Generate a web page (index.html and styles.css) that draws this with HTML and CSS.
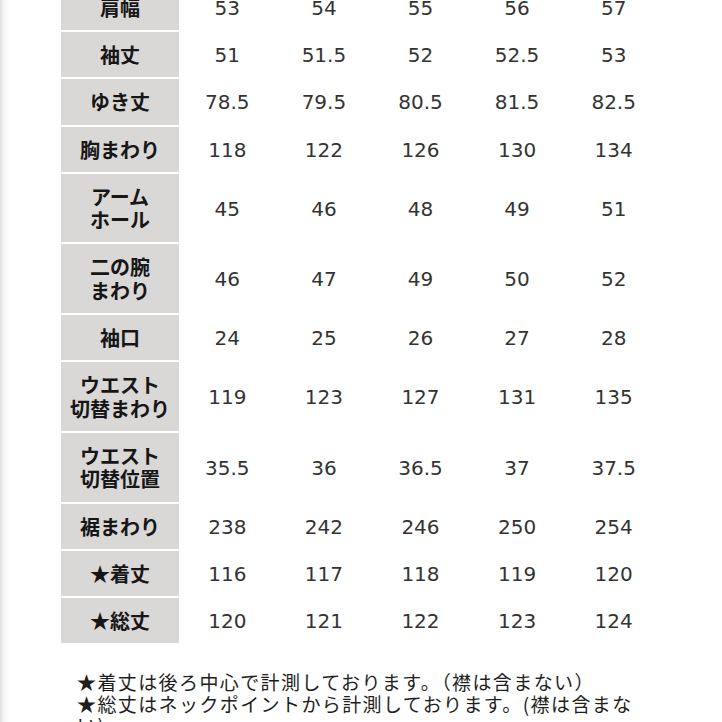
FILE: index.html
```html
<!DOCTYPE html>
<html lang="ja">
<head>
<meta charset="utf-8">
<title>サイズ表</title>
<link rel="stylesheet" href="styles.css">
</head>
<body>
<div class="page">
  <div class="chart">
    <div class="label">肩幅</div><div class="val">53</div><div class="val">54</div><div class="val">55</div><div class="val">56</div><div class="val">57</div>
    <div class="label">袖丈</div><div class="val">51</div><div class="val">51.5</div><div class="val">52</div><div class="val">52.5</div><div class="val">53</div>
    <div class="label">ゆき丈</div><div class="val">78.5</div><div class="val">79.5</div><div class="val">80.5</div><div class="val">81.5</div><div class="val">82.5</div>
    <div class="label">胸まわり</div><div class="val">118</div><div class="val">122</div><div class="val">126</div><div class="val">130</div><div class="val">134</div>
    <div class="label">アーム<br>ホール</div><div class="val">45</div><div class="val">46</div><div class="val">48</div><div class="val">49</div><div class="val">51</div>
    <div class="label">二の腕<br>まわり</div><div class="val">46</div><div class="val">47</div><div class="val">49</div><div class="val">50</div><div class="val">52</div>
    <div class="label">袖口</div><div class="val">24</div><div class="val">25</div><div class="val">26</div><div class="val">27</div><div class="val">28</div>
    <div class="label">ウエスト<br>切替まわり</div><div class="val">119</div><div class="val">123</div><div class="val">127</div><div class="val">131</div><div class="val">135</div>
    <div class="label">ウエスト<br>切替位置</div><div class="val">35.5</div><div class="val">36</div><div class="val">36.5</div><div class="val">37</div><div class="val">37.5</div>
    <div class="label">裾まわり</div><div class="val">238</div><div class="val">242</div><div class="val">246</div><div class="val">250</div><div class="val">254</div>
    <div class="label">★着丈</div><div class="val">116</div><div class="val">117</div><div class="val">118</div><div class="val">119</div><div class="val">120</div>
    <div class="label">★総丈</div><div class="val">120</div><div class="val">121</div><div class="val">122</div><div class="val">123</div><div class="val">124</div>
  </div>
  <p class="note">★着丈は後ろ中心で計測しております。（襟は含まない）<br>★総丈はネックポイントから計測しております。(襟は含まない)</p>
</div>
</body>
</html>
```
FILE: styles.css
```css
html, body {
  margin: 0;
  padding: 0;
  background: #ffffff;
}

.page {
  width: 722px;
  height: 722px;
  overflow: hidden;
  background: linear-gradient(to right, #e0e0e0 0px, #f6f6f6 4px, #ffffff 10px);
}

.chart {
  display: grid;
  grid-template-columns: 118px repeat(5, 96.6px);
  row-gap: 2px;
  margin-left: 61px;
  margin-top: -15.3px;
}

.label {
  background: #dad7d7;
  padding: 11px 0;
  line-height: 23.3px;
  font-family: "Noto Sans CJK JP", "Noto Sans", sans-serif;
  font-weight: 700;
  font-size: 20px;
  color: #161616;
  text-align: center;
  display: flex;
  align-items: center;
  justify-content: center;
}

.val {
  display: flex;
  align-items: center;
  justify-content: center;
  font-family: "DejaVu Sans", "Liberation Sans", sans-serif;
  font-size: 20px;
  color: #333333;
  padding-top: 1px;
}

.note {
  margin: 28px 0 0 77px;
  width: 575px;
  font-family: "Noto Sans CJK JP", "Noto Sans", sans-serif;
  font-size: 19px;
  letter-spacing: 1.4px;
  line-height: 21.5px;
  color: #1e1e1e;
}
```
